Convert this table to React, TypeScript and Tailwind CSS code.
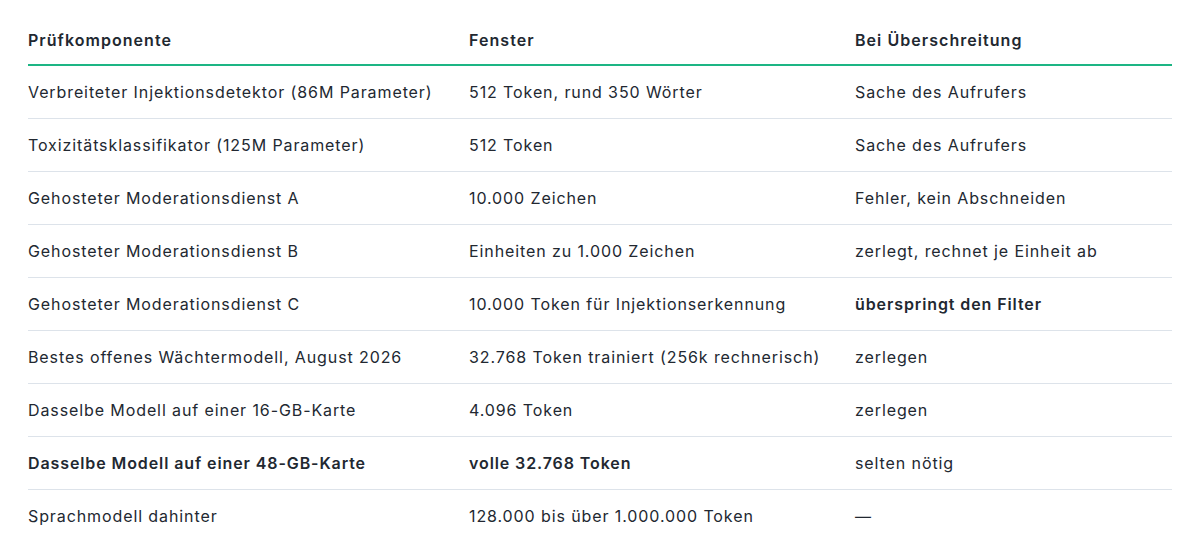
import React from "react";

type Row = { a: string; b: string; c: string; boldA?: boolean; boldB?: boolean; boldC?: boolean };

const rows: Row[] = [
  { a: "Verbreiteter Injektionsdetektor (86M Parameter)", b: "512 Token, rund 350 Wörter", c: "Sache des Aufrufers" },
  { a: "Toxizitätsklassifikator (125M Parameter)", b: "512 Token", c: "Sache des Aufrufers" },
  { a: "Gehosteter Moderationsdienst A", b: "10.000 Zeichen", c: "Fehler, kein Abschneiden" },
  { a: "Gehosteter Moderationsdienst B", b: "Einheiten zu 1.000 Zeichen", c: "zerlegt, rechnet je Einheit ab" },
  { a: "Gehosteter Moderationsdienst C", b: "10.000 Token für Injektionserkennung", c: "überspringt den Filter", boldC: true },
  { a: "Bestes offenes Wächtermodell, August 2026", b: "32.768 Token trainiert (256k rechnerisch)", c: "zerlegen" },
  { a: "Dasselbe Modell auf einer 16-GB-Karte", b: "4.096 Token", c: "zerlegen" },
  { a: "Dasselbe Modell auf einer 48-GB-Karte", b: "volle 32.768 Token", c: "selten nötig", boldA: true, boldB: true },
  { a: "Sprachmodell dahinter", b: "128.000 bis über 1.000.000 Token", c: "—" },
];

export default function App() {
  return (
    <div
      className="w-[1200px] h-[556px] bg-white px-[28px] pt-[16px] text-[#222831]"
      style={{ fontFamily: 'Inter, sans-serif' }}
    >
      <div className="grid grid-cols-[441px_386px_1fr] text-[16px] leading-[24px] tracking-[1.05px] border-b-2 border-[#1db584] font-semibold">
        <div className="py-[12px]">Prüfkomponente</div>
        <div className="py-[12px]">Fenster</div>
        <div className="py-[12px]">Bei Überschreitung</div>
      </div>
      {rows.map((r, i) => (
        <div
          key={i}
          className={
            "grid grid-cols-[441px_386px_1fr] text-[16px] leading-[24px] tracking-[0.9px] " +
            (i < rows.length - 1 ? "border-b border-[#dde3ea]" : "")
          }
        >
          <div className={"py-[14px] " + (r.boldA ? "font-semibold" : "")}>{r.a}</div>
          <div className={"py-[14px] " + (r.boldB ? "font-semibold" : "")}>{r.b}</div>
          <div className={"py-[14px] " + (r.boldC ? "font-semibold" : "")}>{r.c}</div>
        </div>
      ))}
    </div>
  );
}
